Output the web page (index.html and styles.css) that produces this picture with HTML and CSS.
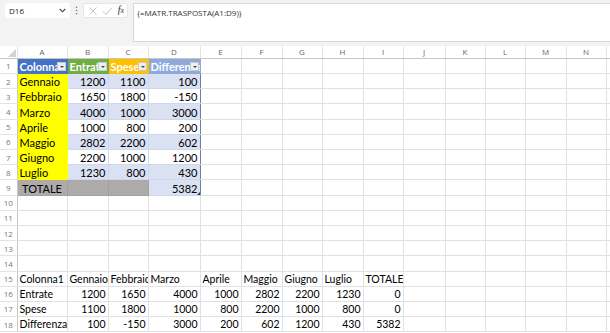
FILE: index.html
```html
<!DOCTYPE html>
<html>
<head>
<meta charset="utf-8">
<link rel="stylesheet" href="styles.css">
</head>
<body>
<div class="app">
  <div class="fbar">
    <div class="namebox"><span>D16</span>
      <svg class="chev" width="7" height="5" viewBox="0 0 7 5"><path d="M0.8 1 L3.5 3.8 L6.2 1" fill="none" stroke="#444" stroke-width="1.1"/></svg>
    </div>
    <div class="dots"><svg width="3" height="9" viewBox="0 0 3 9"><circle cx="1.5" cy="1.2" r="0.8" fill="#777"/><circle cx="1.5" cy="4.5" r="0.8" fill="#777"/><circle cx="1.5" cy="7.8" r="0.8" fill="#777"/></svg></div>
    <div class="fbtns">
      <svg width="10" height="10" viewBox="0 0 10 10"><path d="M1.5 1.5 L8.5 8.5 M8.5 1.5 L1.5 8.5" stroke="#c4c4c4" stroke-width="1"/></svg>
      <svg width="11" height="10" viewBox="0 0 11 10"><path d="M1 5.5 L4 8.5 L10 1.5" fill="none" stroke="#c4c4c4" stroke-width="1"/></svg>
      <span class="fx">f<span class="fxx">x</span></span>
    </div>
    <div class="formula">{=MATR.TRASPOSTA(A1:D9)}</div>
  </div>
  <table class="sheet">
    <colgroup>
      <col class="c-hdr"><col class="c-a"><col class="c-b"><col class="c-c"><col class="c-d"><col class="c-41"><col class="c-41"><col class="c-40"><col class="c-41"><col class="c-40"><col class="c-42"><col class="c-40"><col class="c-40"><col class="c-41"><col class="c-40"><col class="c-rest">
    </colgroup>
    <thead>
      <tr class="hrow">
        <th class="corner"><svg width="8" height="8" viewBox="0 0 8 8"><polygon points="8,0 8,8 0,8" fill="#d2d2d2"/></svg></th>
        <th>A</th><th>B</th><th>C</th><th>D</th><th>E</th><th>F</th><th>G</th><th>H</th><th>I</th><th>J</th><th>K</th><th>L</th><th>M</th><th>N</th><th></th>
      </tr>
    </thead>
    <tbody>
      <tr class="r"><th>1</th>
        <td class="th-cell blue">Colonna1<span class="flt"></span></td>
        <td class="th-cell green">Entrate<span class="flt"></span></td>
        <td class="th-cell orange">Spese<span class="flt"></span></td>
        <td class="th-cell lblue">Differenza<span class="flt"></span></td>
        <td></td><td></td><td></td><td></td><td></td><td></td><td></td><td></td><td></td><td></td><td></td></tr>
      <tr class="r"><th>2</th><td class="yel">Gennaio</td><td class="n tb band">1200</td><td class="n tb band">1100</td><td class="n tb band dcol">100</td><td></td><td></td><td></td><td></td><td></td><td></td><td></td><td></td><td></td><td></td><td></td></tr>
      <tr class="r"><th>3</th><td class="yel">Febbraio</td><td class="n tb">1650</td><td class="n tb">1800</td><td class="n tb dcol">-150</td><td></td><td></td><td></td><td></td><td></td><td></td><td></td><td></td><td></td><td></td><td></td></tr>
      <tr class="r"><th>4</th><td class="yel">Marzo</td><td class="n tb band">4000</td><td class="n tb band">1000</td><td class="n tb band dcol">3000</td><td></td><td></td><td></td><td></td><td></td><td></td><td></td><td></td><td></td><td></td><td></td></tr>
      <tr class="r"><th>5</th><td class="yel">Aprile</td><td class="n tb">1000</td><td class="n tb">800</td><td class="n tb dcol">200</td><td></td><td></td><td></td><td></td><td></td><td></td><td></td><td></td><td></td><td></td><td></td></tr>
      <tr class="r"><th>6</th><td class="yel">Maggio</td><td class="n tb band">2802</td><td class="n tb band">2200</td><td class="n tb band dcol">602</td><td></td><td></td><td></td><td></td><td></td><td></td><td></td><td></td><td></td><td></td><td></td></tr>
      <tr class="r"><th>7</th><td class="yel">Giugno</td><td class="n tb">2200</td><td class="n tb">1000</td><td class="n tb dcol">1200</td><td></td><td></td><td></td><td></td><td></td><td></td><td></td><td></td><td></td><td></td><td></td></tr>
      <tr class="r"><th>8</th><td class="yel">Luglio</td><td class="n tb band">1230</td><td class="n tb band">800</td><td class="n tb band dcol">430</td><td></td><td></td><td></td><td></td><td></td><td></td><td></td><td></td><td></td><td></td><td></td></tr>
      <tr class="r"><th>9</th><td class="gray ctr">TOTALE</td><td class="gray"></td><td class="gray"></td><td class="n tb band dcol last">5382<span class="handle"></span></td><td></td><td></td><td></td><td></td><td></td><td></td><td></td><td></td><td></td><td></td><td></td></tr>
      <tr class="r"><th>10</th><td></td><td></td><td></td><td></td><td></td><td></td><td></td><td></td><td></td><td></td><td></td><td></td><td></td><td></td><td></td></tr>
      <tr class="r"><th>11</th><td></td><td></td><td></td><td></td><td></td><td></td><td></td><td></td><td></td><td></td><td></td><td></td><td></td><td></td><td></td></tr>
      <tr class="r"><th>12</th><td></td><td></td><td></td><td></td><td></td><td></td><td></td><td></td><td></td><td></td><td></td><td></td><td></td><td></td><td></td></tr>
      <tr class="r"><th>13</th><td></td><td></td><td></td><td></td><td></td><td></td><td></td><td></td><td></td><td></td><td></td><td></td><td></td><td></td><td></td></tr>
      <tr class="r"><th>14</th><td></td><td></td><td></td><td></td><td></td><td></td><td></td><td></td><td></td><td></td><td></td><td></td><td></td><td></td><td></td></tr>
      <tr class="r"><th>15</th><td>Colonna1</td><td>Gennaio</td><td>Febbraio</td><td>Marzo</td><td>Aprile</td><td>Maggio</td><td>Giugno</td><td>Luglio</td><td>TOTALE</td><td></td><td></td><td></td><td></td><td></td><td></td></tr>
      <tr class="r"><th>16</th><td>Entrate</td><td class="n">1200</td><td class="n">1650</td><td class="n">4000</td><td class="n">1000</td><td class="n">2802</td><td class="n">2200</td><td class="n">1230</td><td class="n">0</td><td></td><td></td><td></td><td></td><td></td><td></td></tr>
      <tr class="r"><th>17</th><td>Spese</td><td class="n">1100</td><td class="n">1800</td><td class="n">1000</td><td class="n">800</td><td class="n">2200</td><td class="n">1000</td><td class="n">800</td><td class="n">0</td><td></td><td></td><td></td><td></td><td></td><td></td></tr>
      <tr class="r"><th>18</th><td>Differenza</td><td class="n">100</td><td class="n">-150</td><td class="n">3000</td><td class="n">200</td><td class="n">602</td><td class="n">1200</td><td class="n">430</td><td class="n">5382</td><td></td><td></td><td></td><td></td><td></td><td></td></tr>
    </tbody>
  </table>
</div>
</body>
</html>
```
FILE: styles.css
```css
html, body {
  margin: 0;
  padding: 0;
  background: #ffffff;
  overflow: hidden;
}
.app {
  width: 610px;
  height: 333px;
  overflow: hidden;
  font-family: "Open Sans", "DejaVu Sans", sans-serif;
}
.fbar {
  display: flex;
  align-items: flex-start;
  height: 46px;
  box-sizing: border-box;
  padding: 3px 0 0 5px;
  background: #f3f3f3;
}
.namebox {
  width: 65px;
  height: 15px;
  box-sizing: border-box;
  background: #fff;
  border-radius: 2px;
  display: flex;
  align-items: center;
  justify-content: space-between;
  padding: 0 4px 0 4px;
  font-size: 8px;
  color: #222;
}
.dots {
  width: 6px;
  height: 15px;
  margin-left: 3px;
  display: flex;
  align-items: center;
  justify-content: center;
}
.fbtns {
  margin-left: 4px;
  width: 45px;
  height: 15px;
  box-sizing: border-box;
  background: #fff;
  border: 1px solid #e6e6e6;
  border-radius: 2px;
  display: flex;
  align-items: center;
  justify-content: space-between;
  padding: 0 3px 0 4px;
}
.fx {
  font-family: "Liberation Serif", "DejaVu Serif", serif;
  font-style: italic;
  font-size: 10px;
  color: #333;
  line-height: 10px;
}
.fxx {
  font-size: 8px;
}
.formula {
  flex: 1;
  margin-left: 5px;
  height: 39px;
  box-sizing: border-box;
  background: #fff;
  border: 1px solid #d8d8d8;
  border-right: none;
  padding: 3px 0 0 3px;
  font-size: 8px;
  line-height: 11px;
  color: #333;
}
.sheet {
  width: 610px;
  table-layout: fixed;
  border-collapse: collapse;
  font-family: Lato, "Liberation Sans", sans-serif;
  font-size: 10.5px;
  color: #000;
}
.c-hdr { width: 17px; }
.c-a { width: 50px; }
.c-b { width: 41px; }
.c-c { width: 40px; }
.c-d { width: 52px; }
.c-40 { width: 40px; }
.c-41 { width: 41px; }
.c-42 { width: 42px; }
.c-rest { width: 4px; }

.hrow {
  height: 12.4px;
}
.hrow th {
  padding: 0;
  font-family: "Open Sans", sans-serif;
  font-weight: normal;
  font-size: 8px;
  line-height: 10px;
  color: #666;
  background: #fff;
  border-right: 1px solid #e4e4e4;
  border-bottom: 1px solid #c6c6c6;
  text-align: center;
  vertical-align: middle;
}
.hrow th.corner {
  text-align: right;
  vertical-align: bottom;
  padding: 0 1px 1px 0;
  line-height: 0;
}
.r {
  height: 15.2px;
}
.r th {
  padding: 0;
  font-family: "Open Sans", sans-serif;
  font-weight: normal;
  font-size: 8px;
  color: #777;
  background: #fff;
  text-align: center;
  vertical-align: middle;
  border-right: 1px solid #c6c6c6;
  border-bottom: 1px solid #e4e4e4;
}
.r td {
  padding: 0 2px;
  border: 1px solid #e1e1e1;
  white-space: nowrap;
  overflow: hidden;
  line-height: 13px;
  vertical-align: bottom;
  text-align: left;
  position: relative;
}
.r td.n {
  text-align: right;
}
.r td.ctr {
  text-align: center;
}
.th-cell {
  color: #fff;
  font-weight: bold;
  font-size: 11px;
  padding-right: 12px !important;
}
.r td.blue { background: #4472c4; border-color: #4472c4; }
.r td.green { background: #70ad47; border-color: #70ad47; }
.r td.orange { background: #ffc000; border-color: #ffc000; }
.r td.lblue { background: #8eaadb; border-color: #8eaadb; }
.r td.yel { background: #ffff00; border-color: #ffff00; border-left-color: #e1e1e1; font-size: 11px; }
.r td.tb { border-color: #cfd7e8; font-size: 11px; }
.r td.band { background: #d9e1f2; }
.r td.dcol { border-left-color: #8f9fb8; border-right-color: #6f7f98; }
.r td.gray { background: #aeaaaa; border-color: #a3a0a0; color: #000; font-size: 11px; }
.flt {
  position: absolute;
  right: 1px;
  top: 3px;
  width: 9px;
  height: 9px;
  box-sizing: border-box;
  background: #eeeeee;
  border: 1px solid #c9c9c9;
}
.flt::after {
  content: "";
  position: absolute;
  left: 2px;
  top: 3px;
  border-left: 2px solid transparent;
  border-right: 2px solid transparent;
  border-top: 2px solid #444;
}
.handle {
  position: absolute;
  right: 0;
  bottom: 0;
  width: 0;
  height: 0;
  border-left: 3px solid transparent;
  border-bottom: 3px solid #1f3864;
}
```
